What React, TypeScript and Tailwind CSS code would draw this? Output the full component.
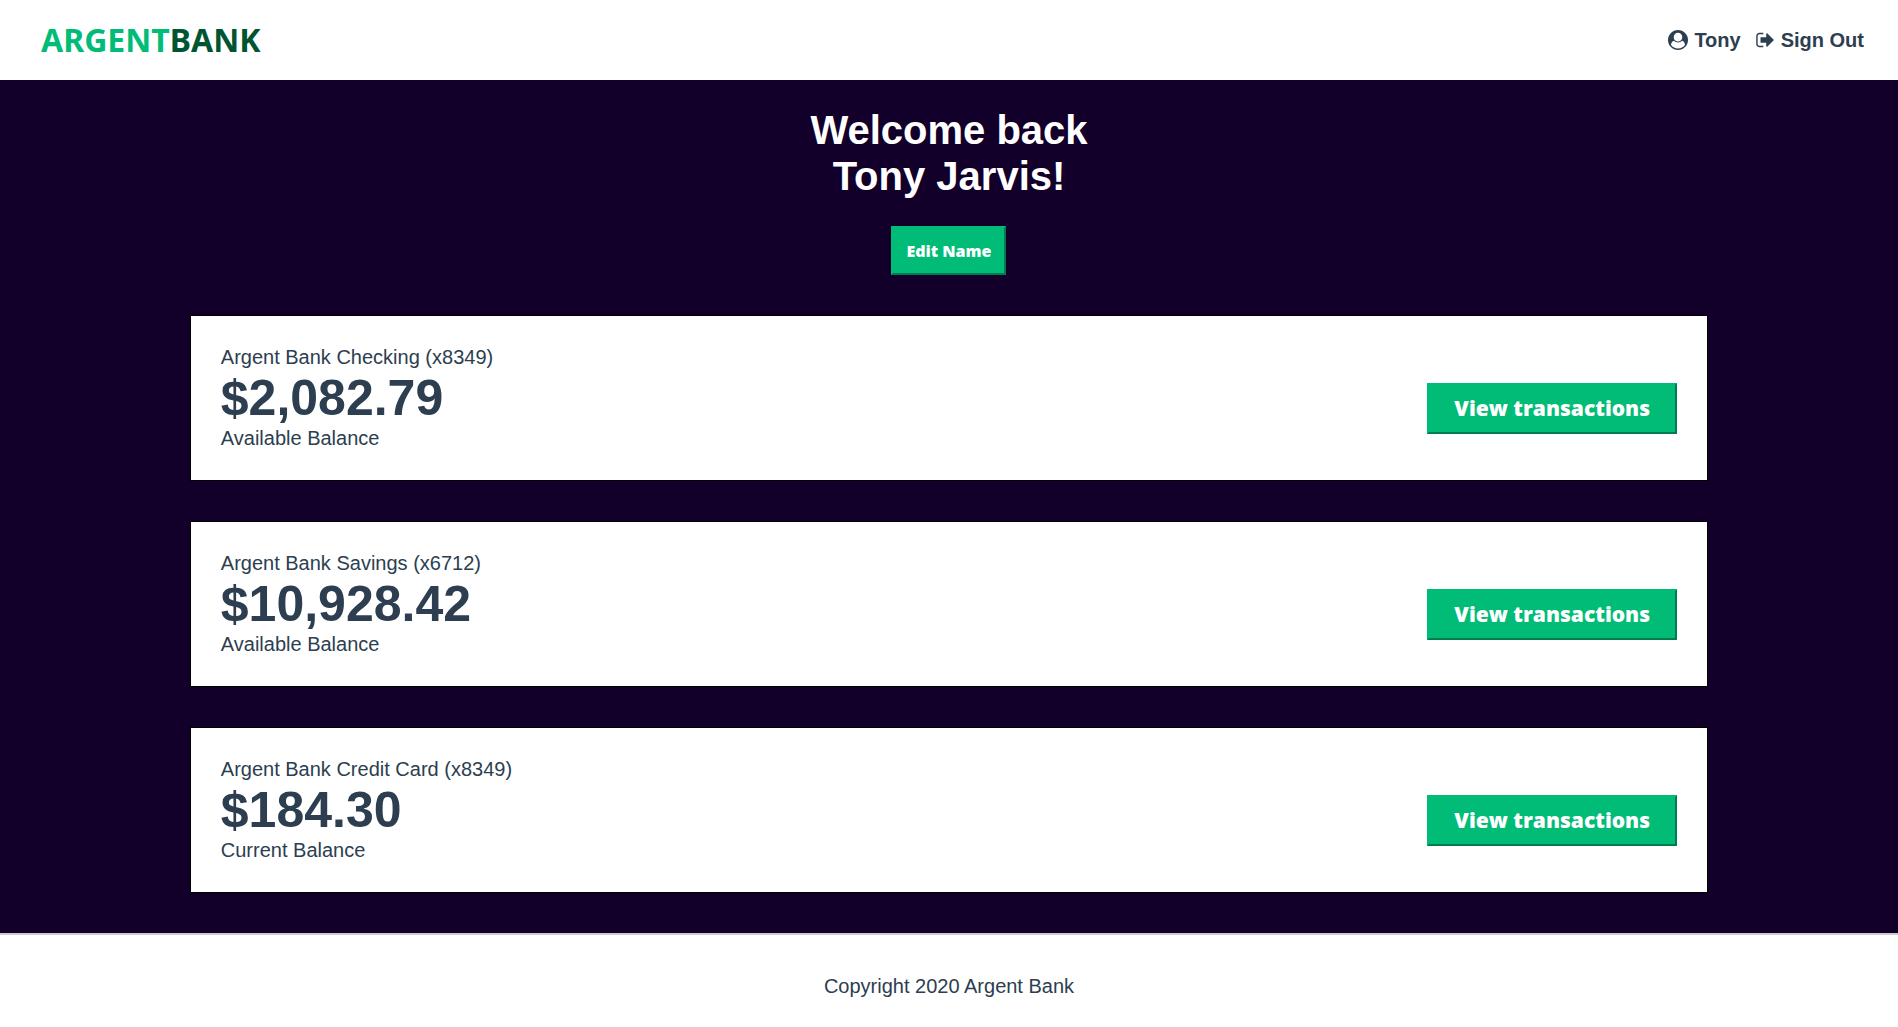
type Account = { title: string; amount: string; description: string };

const accounts: Account[] = [
  { title: "Argent Bank Checking (x8349)", amount: "$2,082.79", description: "Available Balance" },
  { title: "Argent Bank Savings (x6712)", amount: "$10,928.42", description: "Available Balance" },
  { title: "Argent Bank Credit Card (x8349)", amount: "$184.30", description: "Current Balance" },
];

function UserIcon() {
  return (
    <svg viewBox="0 0 1792 1792" className="size-5" fill="currentColor" aria-hidden="true">
      <path d="M1523 1339q-22-155-87.5-257.5t-184.5-118.5q-67 74-159.5 115.5t-195.5 41.5-195.5-41.5-159.5-115.5q-119 16-184.5 118.5t-87.5 257.5q106 150 271 237.5t356 87.5 356-87.5 271-237.5zM1280 640q0-159-112.5-271.5t-271.5-112.5-271.5 112.5-112.5 271.5 112.5 271.5 271.5 112.5 271.5-112.5 112.5-271.5zM1792 896q0 182-71 347.5t-190.5 286-285.5 191.5-349 71q-182 0-348-71t-286-191-191-286-71-348 71-348 191-286 286-191 348-71 348 71 286 191 191 286 71 348z" />
    </svg>
  );
}

function SignOutIcon() {
  return (
    <svg viewBox="0 0 1664 1792" className="h-5 w-[19px]" fill="currentColor" aria-hidden="true">
      <path d="M640 1440q0 4 1 20t.5 26.5-3 23.5-10 19.5-20.5 6.5h-320q-119 0-203.5-84.5t-84.5-203.5v-704q0-119 84.5-203.5t203.5-84.5h320q13 0 22.5 9.5t9.5 22.5q0 4 1 20t.5 26.5-3 23.5-10 19.5-20.5 6.5h-320q-66 0-113 47t-47 113v704q0 66 47 113t113 47h312l11.5 1 11.5 3 8 5.5 7 9 2 13.5zM1568 896q0 26-19 45l-544 544q-19 19-45 19t-45-19-19-45v-288h-448q-26 0-45-19t-19-45v-384q0-26 19-45t45-19h448v-288q0-26 19-45t45-19 45 19l544 544q19 19 19 45z" />
    </svg>
  );
}

function Header() {
  return (
    <header className="flex h-20 items-center justify-between bg-white pr-[34px] pl-[41px]">
      <a href="#home" aria-label="Argent Bank home" className="flex font-['Noto_Sans',sans-serif] text-[32px] leading-10 font-bold">
        <span className="text-[#00bc77]">ARGENT</span>
        <span className="text-[#005431]">BANK</span>
      </a>
      <nav className="flex items-center gap-[15px] font-bold">
        <a href="#profile" className="flex items-center gap-[6px]">
          <UserIcon />
          Tony
        </a>
        <a href="#sign-out" className="flex items-center gap-[6px]">
          <SignOutIcon />
          Sign Out
        </a>
      </nav>
    </header>
  );
}

function AccountCard({ title, amount, description }: Account) {
  return (
    <section className="flex w-4/5 items-center justify-between border border-black bg-white p-[30px]">
      <div>
        <h3>{title}</h3>
        <p className="text-[50px] leading-[58px] font-bold">{amount}</p>
        <p>{description}</p>
      </div>
      <button
        type="button"
        className="mt-5 w-[250px] border-2 border-[#00bc77] border-r-[#007d4f] border-b-[#007d4f] bg-[#00bc77] py-2 font-['Open_Sans',sans-serif] text-[21px] leading-[31px] font-extrabold text-white"
      >
        View transactions
      </button>
    </section>
  );
}

export default function App() {
  return (
    <div className="flex min-h-screen flex-col bg-white font-['Liberation_Sans',Arial,sans-serif] text-[20px] leading-[23px] text-[#2c3e50]">
      <Header />
      <main className="flex grow flex-col items-center gap-10 bg-[#12002b] pt-[27px] pb-10">
        <div className="flex flex-col items-center gap-[27px]">
          <h1 className="text-center text-[40px] leading-[46px] font-bold text-white">
            Welcome back
            <br />
            Tony Jarvis!
          </h1>
          <button
            type="button"
            className="w-[115px] border-2 border-[#00bc77] border-r-[#007d4f] border-b-[#007d4f] bg-[#00bc77] pt-3 pb-[10px] font-['Open_Sans',sans-serif] text-[16px] leading-[23px] font-extrabold text-white"
          >
            Edit Name
          </button>
        </div>
        {accounts.map((account) => (
          <AccountCard key={account.title} {...account} />
        ))}
      </main>
      <footer className="border-t-2 border-[#cccccc] pt-10 pb-[29px] text-center">
        <p>Copyright 2020 Argent Bank</p>
      </footer>
    </div>
  );
}
